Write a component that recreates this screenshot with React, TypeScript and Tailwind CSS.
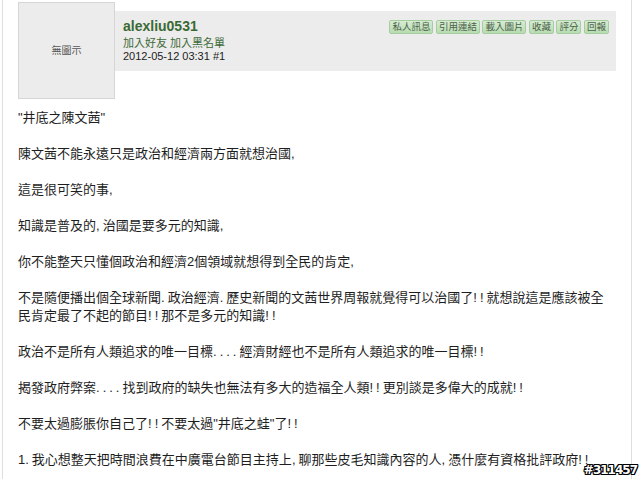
const cjk = { fontFamily: '"Liberation Sans", "Noto Sans CJK TC", sans-serif' };

const actions = ["私人訊息", "引用連結", "載入圖片", "收藏", "評分", "回報"];

// one entry per rendered line; "" = blank spacer line
const lines = [
  '"井底之陳文茜"',
  "",
  "陳文茜不能永遠只是政治和經濟兩方面就想治國,",
  "",
  "這是很可笑的事,",
  "",
  "知識是普及的,治國是要多元的知識,",
  "",
  "你不能整天只懂個政治和經濟2個領域就想得到全民的肯定,",
  "",
  "不是隨便播出個全球新聞.政治經濟.歷史新聞的文茜世界周報就覺得可以治國了!!就想說這是應該被全",
  "民肯定最了不起的節目!!那不是多元的知識!!",
  "",
  "政治不是所有人類追求的唯一目標....經濟財經也不是所有人類追求的唯一目標!!",
  "",
  "揭發政府弊案....找到政府的缺失也無法有多大的造福全人類!!更別談是多偉大的成就!!",
  "",
  '不要太過膨脹你自己了!!不要太過"井底之蛙"了!!',
  "",
  "1.我心想整天把時間浪費在中廣電台節目主持上,聊那些皮毛知識內容的人,憑什麼有資格批評政府!!",
];

// half-width punctuation sits in a full half-cell in the original font
function Line({ text }: { text: string }) {
  return (
    <>
      {text.split(/([.,!]+)/).map((part, i) =>
        /^[.,!]+$/.test(part) ? (
          <span key={i} className="tracking-[3px]">
            {part}
          </span>
        ) : (
          part
        )
      )}
    </>
  );
}

export default function App() {
  return (
    <div className="relative h-[479px] w-[640px] overflow-hidden bg-white" style={cjk}>
      <div className="ml-[2px] h-full w-[630px] border-x border-[#dedede] pl-[15px] pr-[15px]">
        <div className="flex pt-[2px]">
          <div className="flex h-[97px] w-[97px] shrink-0 items-center justify-center border border-[#d6d6d6] bg-[#ececec] text-[10px] text-[#555]">
            無圖示
          </div>
          <div className="mt-[9px] flex h-[60px] flex-1 justify-between bg-[#ececec] pl-[8px] pr-[7px]">
            <div className="pt-[6px]">
              <div className="text-[14px] font-bold leading-[18px] text-[#3a6a34]">alexliu0531</div>
              <div className="mt-[1px] text-[11px] leading-[14px] text-[#3d6a37]">加入好友 加入黑名單</div>
              <div className="text-[11px] leading-[13px] text-[#222]">2012-05-12 03:31 #1</div>
            </div>
            <div className="flex gap-[2.5px] pt-[9px]">
              {actions.map((a) => (
                <div
                  key={a}
                  className="h-[14px] rounded-[2px] border border-[#a6cda0] bg-gradient-to-b from-[#d6ecd2] to-[#b8dcb1] px-[2px] text-[9.5px] leading-[12px] text-[#4d5f4b]"
                >
                  {a}
                </div>
              ))}
            </div>
          </div>
        </div>
        <div className="mt-[10px] text-[13px] leading-[18px] text-[#1e1e1e]">
          {lines.map((l, i) => (
            <div key={i} className="h-[18px] whitespace-nowrap">
              <Line text={l} />
            </div>
          ))}
        </div>
      </div>
      <div
        className="absolute bottom-[1px] right-[3px] text-[12px] font-bold leading-[15px] tracking-[-1px] text-white"
        style={{ fontFamily: '"DejaVu Sans", sans-serif', textShadow: "1px 0 #000, -1px 0 #000, 0 1px #000, 0 -1px #000, 1px 1px #000, -1px -1px #000, 1px -1px #000, -1px 1px #000" }}
      >
        #311457
      </div>
    </div>
  );
}
